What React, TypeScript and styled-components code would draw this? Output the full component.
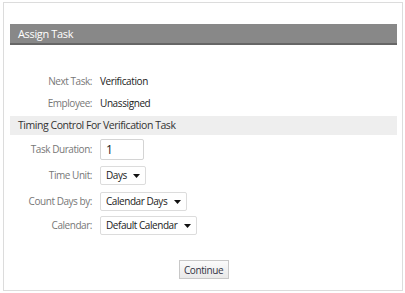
import React from 'react';
import styled, { createGlobalStyle } from 'styled-components';

const GlobalStyle = createGlobalStyle`
  body {
    margin: 0;
    background: #ffffff;
    font-family: "Open Sans", "Liberation Sans", Arial, sans-serif;
  }
`;

const Panel = styled.div`
  box-sizing: border-box;
  width: 400px;
  height: 289px;
  margin: 2px 0 0 3px;
  padding: 21px 5px 0 6px;
  border: 1px solid #dcdcdc;
  background: #ffffff;
  display: flex;
  flex-direction: column;
`;

const Header = styled.div`
  height: 19px;
  line-height: 19px;
  padding-left: 8px;
  background: #888888;
  border-bottom: 2px solid #666666;
  color: #ffffff;
  font-size: 11px;
  letter-spacing: -0.35px;
`;

const InfoGrid = styled.div`
  display: grid;
  grid-template-columns: 82px auto;
  grid-auto-rows: 22px;
  column-gap: 8px;
  align-items: center;
  margin-top: 25px;
`;

const TimingGrid = styled.div`
  display: grid;
  grid-template-columns: 82px auto;
  grid-template-rows: 24px 28px 24px 24px;
  column-gap: 8px;
  align-items: center;
  margin-top: 2px;
`;

const Label = styled.span`
  text-align: right;
  color: #777777;
  font-size: 10px;
  letter-spacing: -0.45px;
  white-space: nowrap;
`;

const Value = styled.span`
  color: #222222;
  font-size: 10px;
  letter-spacing: -0.4px;
`;

const SectionTitle = styled.div`
  margin-top: 2px;
  height: 19px;
  line-height: 19px;
  padding-left: 8px;
  background: #eeeeee;
  color: #333333;
  font-size: 10.5px;
  letter-spacing: -0.45px;
`;

const Field = styled.div`
  display: flex;
  align-items: center;
`;

const TextInput = styled.input`
  box-sizing: border-box;
  width: 44px;
  height: 21px;
  padding: 0 5px;
  border: 1px solid #d4d4d4;
  border-radius: 2px;
  font-family: inherit;
  font-size: 12px;
  color: #222222;
  outline: none;
`;

const SelectBox = styled.div<{ $width: number }>`
  box-sizing: border-box;
  width: ${p => p.$width}px;
  height: 19px;
  padding: 0 5px 0 5px;
  border: 1px solid #dcdcdc;
  border-radius: 2px;
  display: flex;
  align-items: center;
  justify-content: space-between;
  color: #222222;
  font-size: 10px;
  letter-spacing: -0.45px;
  white-space: nowrap;
`;

const Arrow = styled.svg`
  flex: none;
  margin-top: 2px;
`;

const Footer = styled.div`
  display: flex;
  justify-content: center;
  margin-top: 23px;
`;

const Button = styled.button`
  box-sizing: border-box;
  width: 50px;
  height: 19px;
  padding: 0;
  border: 1px solid #c8c8c8;
  background: linear-gradient(#fbfbfb, #e9e9e9);
  color: #333344;
  font-family: inherit;
  font-size: 10px;
  letter-spacing: -0.4px;
  cursor: pointer;
`;

const Select: React.FC<{ width: number; value: string }> = ({ width, value }) => (
  <SelectBox $width={width}>
    <span>{value}</span>
    <Arrow width="7" height="4" viewBox="0 0 7 4">
      <path d="M0 0 L7 0 L3.5 4 Z" fill="#111111" />
    </Arrow>
  </SelectBox>
);

export default function App() {
  return (
    <>
      <GlobalStyle />
      <Panel>
        <Header>Assign Task</Header>
        <InfoGrid>
          <Label>Next Task:</Label>
          <Value>Verification</Value>
          <Label>Employee:</Label>
          <Value>Unassigned</Value>
        </InfoGrid>
        <SectionTitle>Timing Control For Verification Task</SectionTitle>
        <TimingGrid>
          <Label>Task Duration:</Label>
          <Field>
            <TextInput readOnly value="1" />
          </Field>
          <Label>Time Unit:</Label>
          <Field>
            <Select width={46} value="Days" />
          </Field>
          <Label>Count Days by:</Label>
          <Field>
            <Select width={87} value="Calendar Days" />
          </Field>
          <Label>Calendar:</Label>
          <Field>
            <Select width={97} value="Default Calendar" />
          </Field>
        </TimingGrid>
        <Footer>
          <Button>Continue</Button>
        </Footer>
      </Panel>
    </>
  );
}
